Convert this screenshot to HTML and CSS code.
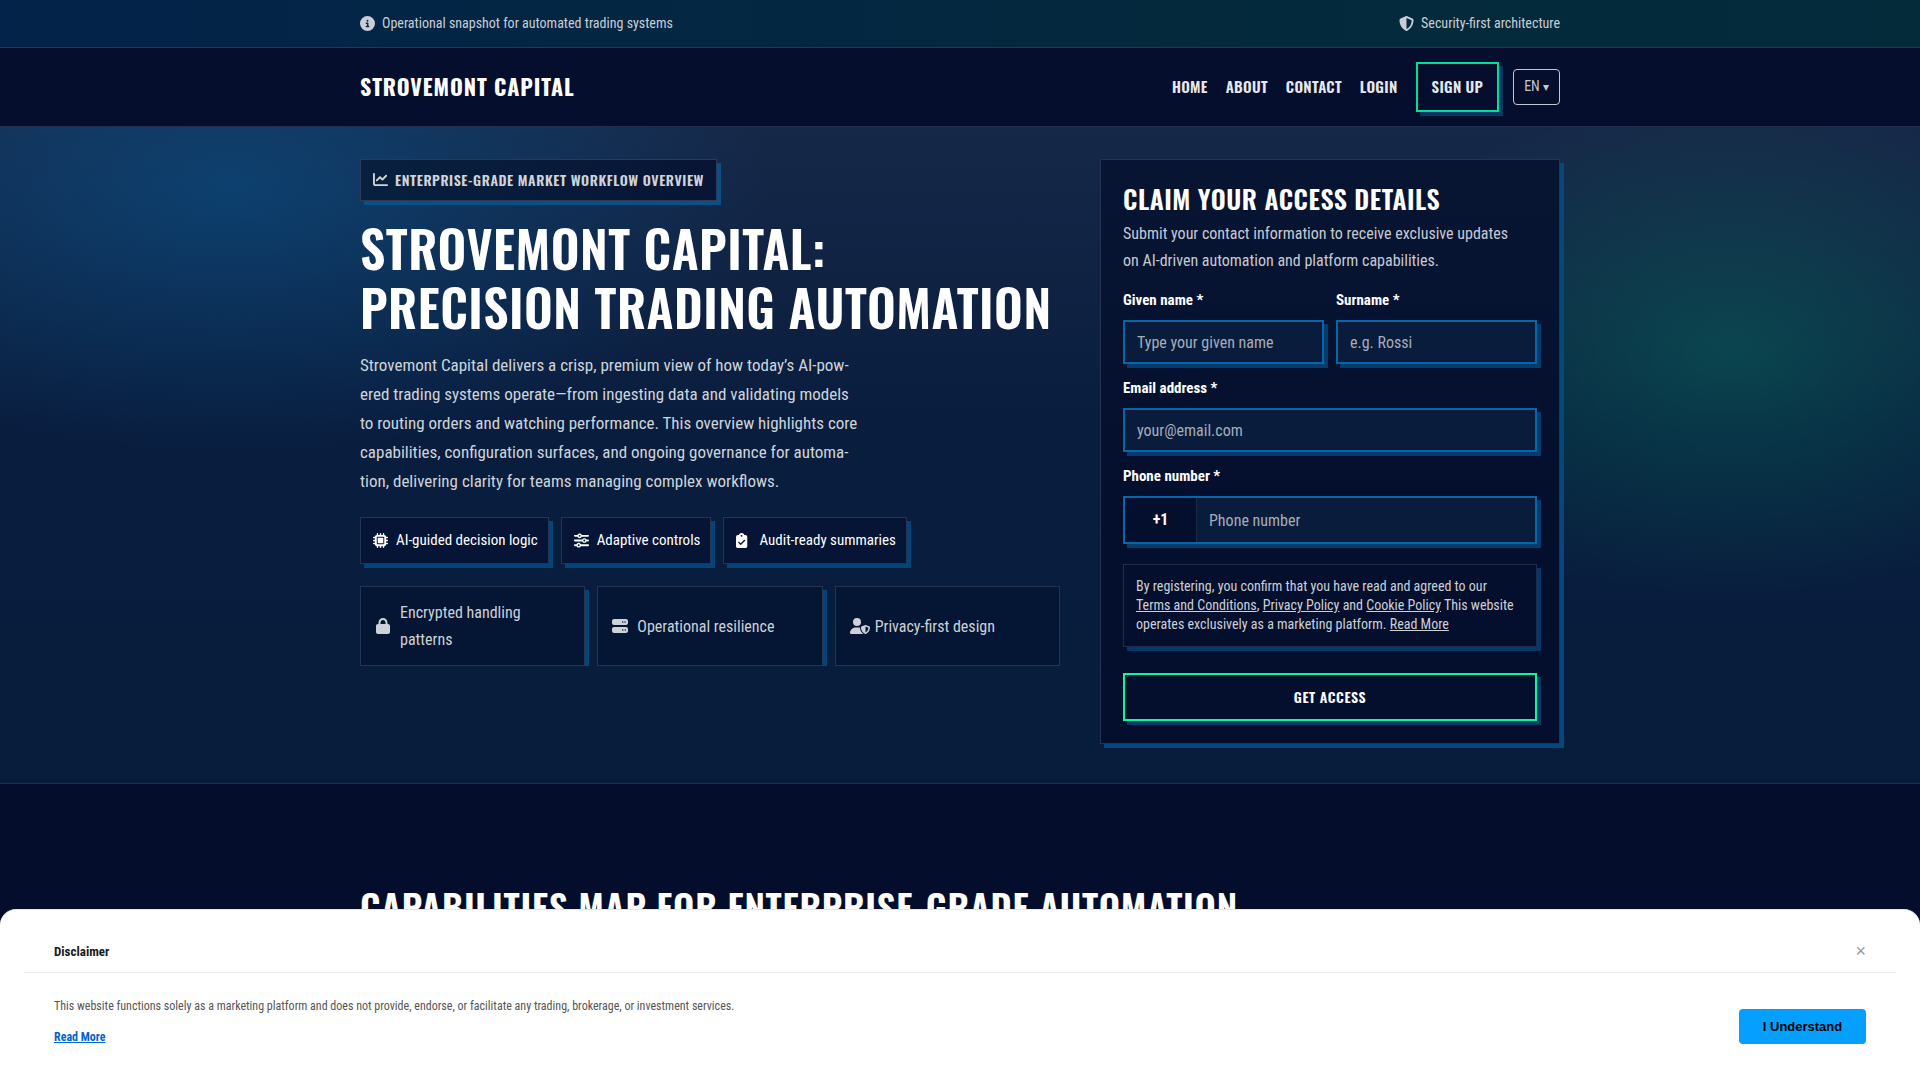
FILE: index.html
```html
<!DOCTYPE html>
<html lang="en">
<head>
  <meta charset="UTF-8" />
  <meta name="viewport" content="width=device-width, initial-scale=1" />
  <title>Strovemont Capital</title>
  <link rel="stylesheet" href="styles.css">
</head>
<body>
  <div class="topbar">
    <div class="container topbar-inner">
      <span class="topbar-item">
        <svg class="icon" viewBox="0 0 512 512"><path d="M256 512A256 256 0 1 0 256 0a256 256 0 1 0 0 512zM216 336h24V272H216c-13.300 0-24-10.700-24-24s10.700-24 24-24h48c13.300 0 24 10.700 24 24v88h8c13.300 0 24 10.700 24 24s-10.700 24-24 24H216c-13.300 0-24-10.700-24-24s10.700-24 24-24zm40-208a32 32 0 1 1 0 64 32 32 0 1 1 0-64z"/></svg>
        Operational snapshot for automated trading systems
      </span>
      <span class="topbar-item">
        <svg class="icon" viewBox="0 0 512 512"><path d="M256 0c4.600 0 9.200 1 13.400 2.900L457.700 82.800c22 9.300 38.400 31 38.300 57.200c-.5 99.200-41.300 280.700-213.600 363.200c-16.700 8-36.100 8-52.800 0C57.300 420.700 16.500 239.200 16 140c-.1-26.200 16.300-47.900 38.300-57.200L242.700 2.900C246.800 1 251.400 0 256 0zm0 66.800V444.800C394 378 431.100 230.100 432 141.400L256 66.800z"/></svg>
        Security-first architecture
      </span>
    </div>
  </div>

  <header class="header">
    <div class="container header-inner">
      <a class="brand" href="#">Strovemont Capital</a>
      <nav class="nav">
        <a href="#">Home</a>
        <a href="#">About</a>
        <a href="#">Contact</a>
        <a href="#">Login</a>
        <a class="nav-signup" href="#">Sign up</a>
        <button class="lang" type="button">EN <span class="caret">▾</span></button>
      </nav>
    </div>
  </header>

  <main>
    <section class="hero">
      <div class="container hero-grid">
        <div class="hero-copy">
          <div class="badge">
            <svg class="icon" viewBox="0 0 512 512"><path d="M64 64c0-17.700-14.300-32-32-32S0 46.300 0 64V400c0 44.200 35.800 80 80 80H480c17.700 0 32-14.300 32-32s-14.300-32-32-32H80c-8.800 0-16-7.200-16-16V64zm406.600 86.600c12.500-12.500 12.500-32.800 0-45.300s-32.800-12.500-45.300 0L320 210.700l-57.400-57.400c-12.500-12.500-32.800-12.500-45.300 0l-112 112c-12.500 12.500-12.500 32.800 0 45.300s32.800 12.500 45.300 0L240 221.300l57.400 57.400c12.500 12.500 32.800 12.500 45.300 0l128-128z"/></svg>
            Enterprise-grade market workflow overview
          </div>
          <h1>Strovemont Capital: Precision Trading Automation</h1>
          <p class="lead">Strovemont Capital delivers a crisp, premium view of how today’s AI-pow-<br>ered trading systems operate—from ingesting data and validating models<br>to routing orders and watching performance. This overview highlights core<br>capabilities, configuration surfaces, and ongoing governance for automa-<br>tion, delivering clarity for teams managing complex workflows.</p>

          <div class="chips">
            <span class="chip">
              <svg class="icon" viewBox="0 0 512 512"><path fill-rule="evenodd" d="M176 24c0-13.300-10.700-24-24-24s-24 10.700-24 24V64c-35.300 0-64 28.700-64 64H24c-13.300 0-24 10.700-24 24s10.700 24 24 24H64v56H24c-13.300 0-24 10.700-24 24s10.700 24 24 24H64v56H24c-13.300 0-24 10.700-24 24s10.700 24 24 24H64c0 35.300 28.700 64 64 64v40c0 13.300 10.700 24 24 24s24-10.700 24-24V448h56v40c0 13.300 10.700 24 24 24s24-10.700 24-24V448h56v40c0 13.300 10.700 24 24 24s24-10.700 24-24V448c35.300 0 64-28.700 64-64h40c13.300 0 24-10.700 24-24s-10.700-24-24-24H448V280h40c13.300 0 24-10.700 24-24s-10.700-24-24-24H448V176h40c13.300 0 24-10.700 24-24s-10.700-24-24-24H448c0-35.300-28.700-64-64-64V24c0-13.300-10.700-24-24-24s-24 10.700-24 24V64H280V24c0-13.300-10.700-24-24-24s-24 10.700-24 24V64H176V24zM160 128H352c17.700 0 32 14.300 32 32V352c0 17.700-14.300 32-32 32H160c-17.700 0-32-14.300-32-32V160c0-17.700 14.300-32 32-32zm192 32H160V352H352V160z"/></svg>
              AI-guided decision logic
            </span>
            <span class="chip">
              <svg class="icon" viewBox="0 0 512 512"><path d="M0 416c0 17.700 14.300 32 32 32l54.700 0c12.300 28.300 40.500 48 73.300 48s61-19.700 73.300-48L480 448c17.700 0 32-14.300 32-32s-14.300-32-32-32l-246.700 0c-12.300-28.300-40.500-48-73.300-48s-61 19.700-73.300 48L32 384c-17.700 0-32 14.300-32 32zm128 0a32 32 0 1 1 64 0 32 32 0 1 1 -64 0zM320 256a32 32 0 1 1 64 0 32 32 0 1 1 -64 0zm32-80c-32.800 0-61 19.700-73.300 48L32 224c-17.700 0-32 14.300-32 32s14.300 32 32 32l246.700 0c12.300 28.300 40.500 48 73.300 48s61-19.700 73.300-48l54.700 0c17.700 0 32-14.300 32-32s-14.300-32-32-32l-54.700 0c-12.300-28.300-40.500-48-73.300-48zM192 128a32 32 0 1 1 0-64 32 32 0 1 1 0 64zm73.300-64C253 35.700 224.800 16 192 16s-61 19.700-73.300 48L32 64C14.300 64 0 78.300 0 96s14.300 32 32 32l86.700 0c12.300 28.300 40.500 48 73.300 48s61-19.700 73.300-48L480 128c17.700 0 32-14.300 32-32s-14.300-32-32-32L265.300 64z"/></svg>
              Adaptive controls
            </span>
            <span class="chip">
              <svg class="icon" viewBox="0 0 512 512"><path d="M192 0c-41.800 0-77.400 26.700-90.500 64H64C28.700 64 0 92.700 0 128V448c0 35.300 28.700 64 64 64H320c35.300 0 64-28.700 64-64V128c0-35.300-28.700-64-64-64H282.500C269.400 26.700 233.800 0 192 0zm0 64a32 32 0 1 1 0 64 32 32 0 1 1 0-64zM305 273L177 401c-9.400 9.400-24.600 9.400-33.900 0L79 337c-9.400-9.400-9.400-24.600 0-33.900s24.600-9.400 33.900 0l47 47L271 239c9.400-9.400 24.600-9.400 33.900 0s9.400 24.600 0 33.900z"/></svg>
              Audit-ready summaries
            </span>
          </div>

          <div class="tiles">
            <div class="tile">
              <svg class="icon" viewBox="-32 0 512 512"><path d="M144 144v48H304V144c0-44.200-35.800-80-80-80s-80 35.800-80 80zM80 192V144C80 64.500 144.500 0 224 0s144 64.500 144 144v48h16c35.300 0 64 28.700 64 64V448c0 35.300-28.700 64-64 64H64c-35.300 0-64-28.700-64-64V256c0-35.300 28.700-64 64-64H80z"/></svg>
              <span>Encrypted handling patterns</span>
            </div>
            <div class="tile">
              <svg class="icon" viewBox="0 0 512 512"><path d="M64 32C28.700 32 0 60.700 0 96v64c0 35.300 28.700 64 64 64H448c35.300 0 64-28.700 64-64V96c0-35.300-28.700-64-64-64H64zm280 72a24 24 0 1 1 0 48 24 24 0 1 1 0-48zm48 24a24 24 0 1 1 48 0 24 24 0 1 1 -48 0zM64 288c-35.300 0-64 28.700-64 64v64c0 35.300 28.700 64 64 64H448c35.300 0 64-28.700 64-64V352c0-35.300-28.700-64-64-64H64zm280 72a24 24 0 1 1 0 48 24 24 0 1 1 0-48zm56 24a24 24 0 1 1 48 0 24 24 0 1 1 -48 0z"/></svg>
              <span>Operational resilience</span>
            </div>
            <div class="tile">
              <svg class="icon" viewBox="0 0 512 512"><path d="M224 256A128 128 0 1 0 224 0a128 128 0 1 0 0 256zm-45.700 48C79.800 304 0 383.800 0 482.300C0 498.700 13.300 512 29.700 512H418.300c1.800 0 3.500-.2 5.300-.5c-76.300-55.100-99.800-141-103.100-200.200c-16.100-4.800-33.100-7.300-50.700-7.300H178.300zm308.800-78.300l-120 48C358 277.400 352 286.200 352 296c0 63.300 25.900 168.800 134.800 214.200c5.900 2.500 12.600 2.500 18.500 0C614.100 464.800 640 359.300 640 296c0-9.800-6-18.600-15.100-22.300l-120-48c-5.700-2.300-12.100-2.300-17.800 0zM591.400 312c-3.900 50.700-27.200 116.700-95.400 149.700V273.800L591.400 312z"/></svg>
              <span>Privacy-first design</span>
            </div>
          </div>
        </div>

        <form class="card">
          <h2>Claim your access details</h2>
          <p class="card-text">Submit your contact information to receive exclusive updates<br>on AI-driven automation and platform capabilities.</p>
          <div class="row">
            <div class="field">
              <label for="given">Given name *</label>
              <input type="text" id="given" name="given" placeholder="Type your given name" />
            </div>
            <div class="field">
              <label for="surname">Surname *</label>
              <input type="text" id="surname" name="surname" placeholder="e.g. Rossi" />
            </div>
          </div>
          <div class="field">
            <label for="email">Email address *</label>
            <input type="email" id="email" name="email" placeholder="your@email.com" />
          </div>
          <div class="field">
            <label for="phone">Phone number *</label>
            <div class="phone">
              <span class="prefix">+1</span>
              <input type="tel" id="phone" name="phone" placeholder="Phone number" />
            </div>
          </div>
          <p class="terms">By registering, you confirm that you have read and agreed to our<br><a href="#">Terms and Conditions</a>, <a href="#">Privacy Policy</a> and <a href="#">Cookie Policy</a> This website<br>operates exclusively as a marketing platform. <a href="#">Read More</a></p>
          <button class="submit" type="submit">Get access</button>
        </form>
      </div>
    </section>

    <section class="capabilities">
      <div class="container">
        <h2>Capabilities map for enterprise-grade automation</h2>
      </div>
    </section>
  </main>

  <div class="disclaimer">
    <div class="disclaimer-head">
      <strong>Disclaimer</strong>
      <button class="close" type="button" aria-label="Close">×</button>
    </div>
    <div class="disclaimer-body">
      <div>
        <p>This website functions solely as a marketing platform and does not provide, endorse, or facilitate any trading, brokerage, or investment services.</p>
        <a href="#">Read More</a>
      </div>
      <button class="accept" type="button">I Understand</button>
    </div>
  </div>
</body>
</html>
```
FILE: styles.css
```css
* {
  box-sizing: border-box;
}
body {
  margin: 0;
  min-height: 100vh;
  overflow: hidden;
  background: #040e2c;
  color: #fff;
  font-family: "Roboto Condensed", "Liberation Sans Narrow", Roboto, sans-serif;
  font-size: 16px;
  line-height: 27px;
}
h1, h2, p {
  margin: 0;
}
h1, h2, .brand, .nav a, .badge, .submit {
  font-family: Oswald, "Roboto Condensed", "Liberation Sans Narrow", Roboto, sans-serif;
  font-weight: 600;
  letter-spacing: 0.02em;
  text-transform: uppercase;
}
.brand, .badge, .submit {
  padding-bottom: 2px;
  letter-spacing: 0.04em;
}
a {
  color: inherit;
}
.container {
  width: 100%;
  max-width: 1248px;
  margin: 0 auto;
  padding: 0 24px;
}
.icon {
  flex: none;
  width: 15px;
  height: 15px;
  fill: currentColor;
  overflow: visible;
}

/* top bar */
.topbar {
  background: linear-gradient(90deg, #03234a, #04293d 60%, #032b3a);
  border-bottom: 1px solid #1c3c56;
  color: #c9ced6;
  font-size: 14px;
}
.topbar-inner {
  display: flex;
  justify-content: space-between;
  padding-top: 10px;
  padding-bottom: 10px;
}
.topbar-item {
  display: flex;
  align-items: center;
  gap: 7px;
}

/* header */
.header {
  background: #050f2d;
  border-bottom: 1px solid #20304e;
}
.header-inner {
  display: flex;
  justify-content: space-between;
  align-items: center;
  padding-top: 14px;
  padding-bottom: 14px;
}
.brand {
  font-size: 22px;
  font-weight: 700;
  text-decoration: none;
}
.nav {
  display: flex;
  align-items: center;
  gap: 18px;
}
.nav a {
  padding-bottom: 2px;
  color: #e6e8ec;
  font-size: 15px;
  line-height: 26px;
  text-decoration: none;
}
.nav .nav-signup {
  margin-right: -4px;
  padding: 9px 14px 11px;
  border: 2px solid #00e096;
  box-shadow: 4px 4px 0 #033868;
}
.lang {
  height: 36px;
  padding: 0 10px;
  background: transparent;
  border: 1px solid #c3c7d0;
  border-radius: 4px;
  color: #c3c7d0;
  font: inherit;
  font-size: 14px;
}
.caret {
  font-size: 12px;
}

/* hero */
.hero {
  padding: 32px 0 39px;
  border-bottom: 1px solid #1d2f4e;
  background:
    radial-gradient(ellipse 540px 270px at 230px 62px, rgba(0, 115, 190, 0.34), transparent),
    radial-gradient(ellipse 420px 250px at calc(100% - 190px) 225px, rgba(0, 255, 150, 0.17), transparent),
    linear-gradient(180deg, #162848, #091d3e 45%, #081d3c);
}
.hero-grid {
  display: grid;
  grid-template-columns: 35fr 23fr;
  gap: 40px;
  align-items: start;
}
.hero-copy {
  display: flex;
  flex-direction: column;
  align-items: flex-start;
  min-width: 0;
}
.badge {
  display: flex;
  align-items: center;
  gap: 7px;
  height: 42px;
  padding: 0 12px 2px;
  border: 1px solid #2b3a57;
  background: linear-gradient(90deg, #08203f, #081535);
  box-shadow: 4px 4px 0 #0a4f86;
  color: #d0d4da;
  font-size: 14px;
}
h1 {
  margin-top: 17px;
  font-size: 50px;
  line-height: 59px;
  letter-spacing: 0.01em;
}
.lead {
  margin-top: 15px;
  color: #d0d4da;
  font-size: 17px;
  line-height: 29px;
}
.chips {
  display: flex;
  gap: 12px;
  margin-top: 21px;
}
.chip {
  display: flex;
  align-items: center;
  gap: 8px;
  height: 47px;
  padding: 0 10px 0 12px;
  border: 1px solid #263453;
  background: #061535;
  box-shadow: 4px 4px 0 #054478;
  font-size: 15px;
}
.tiles {
  display: grid;
  grid-template-columns: repeat(3, 1fr);
  gap: 12px;
  width: 100%;
  margin-top: 22px;
  overflow: hidden;
}
.tile {
  display: flex;
  align-items: center;
  gap: 9px;
  height: 80px;
  padding: 12px 14px;
  border: 1px solid #263453;
  background: #051534;
  box-shadow: 4px 4px 0 #054478;
  color: #cdd1d8;
}
.tile .icon {
  width: 16px;
  height: 16px;
}

/* form card */
.card {
  padding: 22px;
  border: 1px solid #263453;
  background: linear-gradient(180deg, #071533, #040f2d 60%);
  box-shadow: 4px 4px 0 #06487c;
}
.card h2 {
  margin-bottom: 4px;
  font-size: 26px;
  line-height: 34px;
}
.card-text {
  margin-bottom: 14px;
  color: #c6cad2;
}
.row {
  display: grid;
  grid-template-columns: 1fr 1fr;
  gap: 12px;
}
.field {
  margin-bottom: 12px;
}
label {
  display: block;
  margin-bottom: 8px;
  font-size: 15px;
  font-weight: 700;
  line-height: 24px;
}
.field input {
  width: 100%;
  height: 44px;
  padding: 0 12px;
  border: 2px solid #0566a8;
  border-radius: 0;
  outline: none;
  background: #091c3c;
  box-shadow: 4px 4px 0 #033c6d;
  color: #fff;
  font: inherit;
}
.field input::placeholder {
  color: #a5adba;
}
.phone {
  display: flex;
  height: 48px;
  border: 2px solid #0566a8;
  box-shadow: 4px 4px 0 #033c6d;
}
.prefix {
  flex: none;
  width: 72px;
  border-right: 1px solid #1d2b4b;
  font-weight: 700;
  line-height: 44px;
  text-align: center;
}
.field .phone input {
  border: none;
  box-shadow: none;
}
.terms {
  margin-top: 20px;
  padding: 12px;
  border: 1px solid #1f2d4c;
  box-shadow: 4px 4px 0 #033868;
  color: #ccd0d7;
  font-size: 14px;
  line-height: 19px;
}
.submit {
  width: 100%;
  height: 48px;
  margin-top: 26px;
  border: 2px solid #00ff9c;
  background: #040f2d;
  box-shadow: 4px 4px 0 #033868;
  color: #fff;
  font-size: 14px;
}

.capabilities {
  padding: 96px 0;
}
.capabilities h2 {
  font-size: 37px;
  line-height: 54px;
}

/* disclaimer */
.disclaimer {
  position: fixed;
  right: 0;
  bottom: 0;
  left: 0;
  padding: 24px 24px 29px;
  border-top: 1px solid #e6e6e6;
  border-radius: 16px 16px 0 0;
  background: #fff;
  color: #555;
  font-size: 12px;
}
.disclaimer-head {
  display: flex;
  justify-content: space-between;
  align-items: center;
  height: 39px;
  padding: 0 30px 4px;
  border-bottom: 1px solid #ececec;
  color: #1a1a1a;
  font-size: 13px;
}
.close {
  padding: 0;
  border: none;
  background: none;
  color: #999;
  font-family: "Liberation Sans", sans-serif;
  font-size: 18px;
}
.disclaimer-body {
  display: flex;
  justify-content: space-between;
  align-items: flex-end;
  padding: 20px 30px 0;
}
.disclaimer-body p {
  margin-bottom: 4px;
}
.disclaimer-body a {
  color: #0066cc;
  font-weight: 700;
}
.accept {
  width: 127px;
  height: 35px;
  margin-bottom: 7px;
  border: none;
  border-radius: 4px;
  background: #05a0ff;
  color: #000;
  font-family: "Liberation Sans", sans-serif;
  font-size: 13px;
  font-weight: 700;
}
```
